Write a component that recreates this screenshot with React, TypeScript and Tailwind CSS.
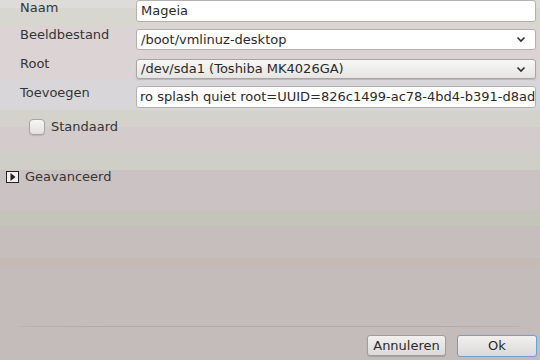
const font = { fontFamily: '"DejaVu Sans", "Liberation Sans", sans-serif' }

function Chevron() {
  return (
    <svg width="10" height="7" viewBox="0 0 10 7" className="shrink-0">
      <polyline points="1.5,1.5 5,5 8.5,1.5" fill="none" stroke="#2e2e2e" strokeWidth="1.6" />
    </svg>
  )
}

function Row({
  label,
  children,
  className,
  labelShift = '-translate-y-[4px]',
}: {
  label: string
  children: React.ReactNode
  className?: string
  labelShift?: string
}) {
  return (
    <div className={`flex items-center ${className ?? ''}`}>
      <div className={`w-[136px] shrink-0 pl-[20px] text-[13px] leading-[16px] text-[#353535] ${labelShift}`}>{label}</div>
      {children}
    </div>
  )
}

export default function App() {
  return (
    <div
      className="flex h-[360px] w-[540px] flex-col overflow-hidden bg-[linear-gradient(to_bottom,#dddcd9_0px,#dddcd9_8px,#d7d7cf_8px,#d7d7cf_26px,#dcd4d4_26px,#dcd4d4_80px,#d8d6d8_80px,#d8d6d8_110px,#d3d3cb_110px,#d3d3cb_127px,#d4cbcc_127px,#d4cbcc_150px,#cfcfc7_150px,#cfcfc7_170px,#cbc3c3_170px,#cbc3c3_210px,#c4c4ba_210px,#c4c4ba_226px,#c6bdbd_226px,#c6bdbd_258px,#c5bbb4_258px,#c5bbb4_267px,#c4bbbb_267px,#c4bbbb_360px)] text-[13px] text-[#353535]"
      style={font}
    >
      <Row label="Naam" labelShift="-translate-y-[3px]">
        <div className="mr-[4px] flex h-[22px] flex-1 items-center rounded-[3px] border border-[#b4b0ae] bg-white px-[4px] text-[#2a2a2a]">
          Mageia
        </div>
      </Row>
      <Row label="Beeldbestand" className="mt-[7px]" labelShift="-translate-y-[5px]">
        <div className="mr-[4px] flex h-[21px] flex-1 items-center justify-between rounded-[3px] border border-[#b4b0ae] bg-white pl-[4px] pr-[9px] text-[#2a2a2a]">
          <span>/boot/vmlinuz-desktop</span>
          <Chevron />
        </div>
      </Row>
      <Row label="Root" className="mt-[9px]" labelShift="-translate-y-[5px]">
        <div className="mr-[4px] flex h-[20px] flex-1 items-center justify-between rounded-[3px] border border-[#a9a5a3] bg-[linear-gradient(to_bottom,#f7f7f6,#e6e5e3)] pl-[4px] pr-[9px] text-[#2a2a2a] shadow-[0_1px_1px_rgba(0,0,0,0.15)]">
          <span>/dev/sda1 (Toshiba MK4026GA)</span>
          <Chevron />
        </div>
      </Row>
      <Row label="Toevoegen" className="mt-[7px]" labelShift="-translate-y-[4px]">
        <div className="mr-[4px] flex h-[22px] min-w-0 flex-1 items-center overflow-hidden whitespace-nowrap rounded-[3px] border border-[#b4b0ae] bg-white pl-[3px] text-[#2a2a2a]">
          ro splash quiet root=UUID=826c1499-ac78-4bd4-b391-d8ad7f3e21c0
        </div>
      </Row>

      <div className="mt-[11px] flex items-center pl-[29px]">
        <div className="h-[16px] w-[16px] rounded-[4px] border border-[#a8a4a2] bg-[linear-gradient(to_bottom,#f6f6f5,#e2e1df)] shadow-[0_1px_1px_rgba(0,0,0,0.12)]" />
        <span className="ml-[6px] leading-[16px]">Standaard</span>
      </div>

      <div className="mt-[34px] flex items-center pl-[6px]">
        <div className="flex h-[12px] w-[13px] items-center justify-center border border-[#222] bg-[#f2f0ee]">
          <svg width="6" height="8" viewBox="0 0 6 8">
            <polygon points="0.5,0 5.5,4 0.5,8" fill="#222" />
          </svg>
        </div>
        <span className="ml-[6px] leading-[16px]">Geavanceerd</span>
      </div>

      <div className="flex-1" />

      <div className="mx-[19px] h-px bg-[linear-gradient(to_right,#b9b3b3,#a9a8ac_20%,#a9a8ac_80%,#b9b3b3)]" />

      <div className="mb-[3px] mt-[8px] flex justify-end gap-[11px] pr-[3px]">
        <div className="flex h-[21px] w-[79px] items-center justify-center rounded-[3px] border border-[#a19d9b] bg-[linear-gradient(to_bottom,#f1f0ee,#dcdad8)] text-[#2a2a2a] shadow-[0_1px_1px_rgba(0,0,0,0.15)]">
          Annuleren
        </div>
        <div className="flex h-[22px] w-[80px] items-center justify-center rounded-[3px] border border-[#6f9fd0] bg-[linear-gradient(to_bottom,#f1f0ee,#dcdad8)] text-[#2a2a2a] shadow-[0_0_1px_#9cc0e6]">
          Ok
        </div>
      </div>
    </div>
  )
}
